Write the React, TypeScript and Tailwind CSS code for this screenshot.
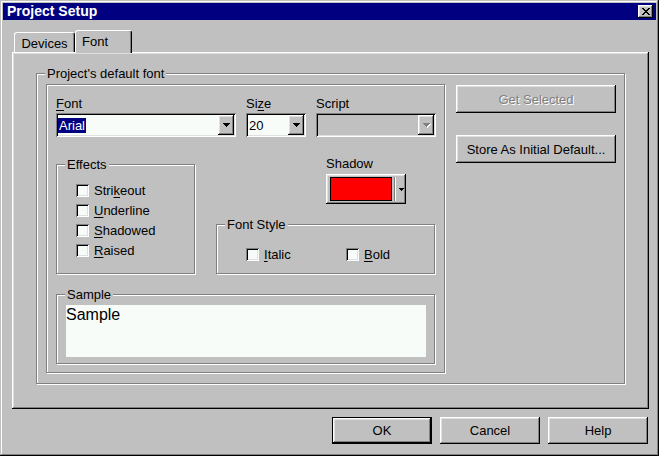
import React from "react";

const raised =
  "shadow-[inset_-1px_-1px_0_#000,inset_1px_1px_0_#fff,inset_-2px_-2px_0_#808080,inset_2px_2px_0_#dfdfdf]";
const sunken =
  "shadow-[inset_1px_1px_0_#808080,inset_-1px_-1px_0_#fff,inset_2px_2px_0_#000,inset_-2px_-2px_0_#dfdfdf]";
const etched =
  "border border-[#808080] shadow-[1px_1px_0_#fff,inset_1px_1px_0_#fff]";

function Arrow({ disabled }: { disabled?: boolean }) {
  const d = "M0 0h7v1H0zM1 1h5v1H1zM2 2h3v1H2zM3 3h1v1H3z";
  return (
    <svg width="8" height="5" viewBox="0 0 8 5" shapeRendering="crispEdges">
      {disabled && <path d={d} fill="#fff" transform="translate(1 1)" />}
      <path d={d} fill={disabled ? "#808080" : "#000"} />
    </svg>
  );
}

function CloseX() {
  return (
    <svg width="8" height="7" viewBox="0 0 8 7" shapeRendering="crispEdges">
      <path
        d="M0 0h2v1H0zM6 0h2v1H6zM1 1h2v1H1zM5 1h2v1H5zM2 2h4v1H2zM3 3h2v1H3zM2 4h4v1H2zM1 5h2v1H1zM5 5h2v1H5zM0 6h2v1H0zM6 6h2v1H6z"
        fill="#000"
      />
    </svg>
  );
}

function Legend({ children }: { children: React.ReactNode }) {
  return (
    <span className="absolute left-[8px] top-[-8px] px-[2px] bg-[#c0c0c0] leading-[15px] whitespace-nowrap">
      {children}
    </span>
  );
}

function Check({ children, className = "" }: { children: React.ReactNode; className?: string }) {
  return (
    <div className={`flex items-center h-[20px] ${className}`}>
      <div className={`w-[13px] h-[13px] shrink-0 bg-[#f8fcf8] ${sunken}`} />
      <span className="ml-[5px] leading-[15px]">{children}</span>
    </div>
  );
}

function Combo({
  className,
  children,
  disabled,
}: {
  className: string;
  children?: React.ReactNode;
  disabled?: boolean;
}) {
  return (
    <div
      className={`flex h-[24px] p-[2px] ${sunken} ${disabled ? "bg-[#c0c0c0]" : "bg-[#f8fcf8]"} ${className}`}
    >
      <div className="flex-1 flex items-center overflow-hidden">{children}</div>
      <div className={`w-[16px] h-full flex items-center justify-center bg-[#c0c0c0] pl-[1px] ${raised}`}>
        <Arrow disabled={disabled} />
      </div>
    </div>
  );
}

function U({ children }: { children: React.ReactNode }) {
  return <span className="underline underline-offset-[2px]">{children}</span>;
}

export default function App() {
  return (
    <div className="w-[659px] h-[456px] bg-[#c0c0c0] p-[3px] flex flex-col text-black text-[13px] leading-[15px] font-['Liberation_Sans',Arial,sans-serif] select-none shadow-[inset_-1px_-1px_0_#000,inset_1px_1px_0_#c0c0c0,inset_-2px_-2px_0_#808080,inset_2px_2px_0_#fff]">
      {/* Title bar */}
      <div className="h-[17px] bg-[#000080] flex items-center justify-between pl-[4px] pr-[3px] shrink-0">
        <span className="text-white font-bold text-[14px] leading-[17px]">Project Setup</span>
        <div className={`w-[15px] h-[13px] bg-[#c0c0c0] flex items-center justify-center pb-[1px] ${raised}`}>
          <CloseX />
        </div>
      </div>

      {/* Tabs + panel */}
      <div className="pl-[9px] pr-[7px] mt-[10px]">
        <div className="flex items-end h-[22px] pl-[2px]">
          <div className="w-[61px] h-[20px] flex justify-center pt-[3px] border-l border-t border-white border-r border-r-black rounded-t-[3px] shadow-[inset_-1px_0_0_#808080]">
            Devices
          </div>
          <div className="relative z-10 w-[57px] h-[23px] mb-[-1px] pl-[6px] pt-[3px] bg-[#c0c0c0] border-l border-t border-white border-r border-r-black rounded-t-[3px] shadow-[inset_-1px_0_0_#808080]">
            Font
          </div>
        </div>
        <div className="w-[637px] h-[357px] pl-[24px] pt-[21px] shadow-[inset_-1px_-1px_0_#000,inset_1px_1px_0_#fff,inset_-2px_-2px_0_#808080,inset_2px_2px_0_#dfdfdf]">
          {/* Project's default font group */}
          <div className={`relative w-[589px] h-[311px] flex items-start pl-[9px] pt-[10px] ${etched}`}>
            <Legend>Project's default font</Legend>

            {/* inner box */}
            <div className={`w-[399px] h-[289px] pl-[9px] pt-[11px] flex flex-col ${etched}`}>
              {/* Row 1: combos */}
              <div className="flex gap-[10px]">
                <div className="w-[180px] flex flex-col">
                  <div className="h-[15px] mb-[2px]">
                    <U>F</U>ont
                  </div>
                  <Combo className="w-[180px]">
                    <span className="bg-[#000080] text-white px-[1px] leading-[15px]">Arial</span>
                  </Combo>
                </div>
                <div className="w-[60px] flex flex-col">
                  <div className="h-[15px] mb-[2px]">
                    Si<U>z</U>e
                  </div>
                  <Combo className="w-[60px]">
                    <span className="pl-[1px] leading-[15px]">20</span>
                  </Combo>
                </div>
                <div className="w-[120px] flex flex-col">
                  <div className="h-[15px] mb-[2px]">Script</div>
                  <Combo className="w-[120px]" disabled />
                </div>
              </div>

              {/* Row 2 */}
              <div className="flex items-start mt-[19px]">
                <div className={`relative mt-[8px] w-[139px] h-[110px] pl-[19px] pt-[15px] flex flex-col ${etched}`}>
                  <Legend>Effects</Legend>
                  <Check>
                    Stri<U>k</U>eout
                  </Check>
                  <Check>
                    <U>U</U>nderline
                  </Check>
                  <Check>
                    <U>S</U>hadowed
                  </Check>
                  <Check>
                    <U>R</U>aised
                  </Check>
                </div>

                <div className="ml-[21px] w-[220px] flex flex-col">
                  <div className="h-[15px] pl-[110px]">Shadow</div>
                  <div className={`ml-[110px] mt-[3px] w-[80px] h-[30px] flex items-center bg-[#c0c0c0] ${raised}`}>
                    <div className="ml-[4px] w-[62px] h-[24px] border border-black bg-[#ff0000]" />
                    <div className="ml-[2px] w-[2px] h-[24px] border-l border-l-[#808080] border-r border-r-white" />
                    <div className="ml-[3px]">
                      <svg width="5" height="3" viewBox="0 0 5 3" shapeRendering="crispEdges">
                        <path d="M0 0h5v1H0zM1 1h3v1H1zM2 2h1v1H2z" fill="#000" />
                      </svg>
                    </div>
                  </div>
                  <div className={`relative mt-[20px] w-[219px] h-[50px] pl-[29px] pt-[19px] flex ${etched}`}>
                    <Legend>Font Style</Legend>
                    <Check className="w-[100px]">
                      <U>I</U>talic
                    </Check>
                    <Check>
                      <U>B</U>old
                    </Check>
                  </div>
                </div>
              </div>

              {/* Sample */}
              <div className={`relative mt-[20px] w-[379px] h-[70px] pl-[9px] pt-[10px] ${etched}`}>
                <Legend>Sample</Legend>
                <div className="w-[360px] h-[52px] bg-[#f8fcf8] text-[16px] leading-[18px] pt-[1px]">Sample</div>
              </div>
            </div>

            {/* Right buttons */}
            <div className="ml-[11px] mt-[1px] flex flex-col">
              <div className={`w-[160px] h-[28px] flex items-center justify-center bg-[#c0c0c0] text-[#808080] [text-shadow:1px_1px_0_#fff] ${raised}`}>
                Get Selected
              </div>
              <div className={`mt-[22px] w-[160px] h-[28px] flex items-center justify-center bg-[#c0c0c0] ${raised}`}>
                Store As Initial Default...
              </div>
            </div>
          </div>
        </div>
      </div>

      {/* Bottom buttons */}
      <div className="mt-[8px] flex justify-end gap-[8px] pr-[8px]">
        <div className="w-[100px] h-[27px] border border-black">
          <div className={`w-full h-full flex items-center justify-center bg-[#c0c0c0] ${raised}`}>OK</div>
        </div>
        <div className={`w-[100px] h-[27px] flex items-center justify-center bg-[#c0c0c0] ${raised}`}>Cancel</div>
        <div className={`w-[100px] h-[27px] flex items-center justify-center bg-[#c0c0c0] ${raised}`}>Help</div>
      </div>
    </div>
  );
}
